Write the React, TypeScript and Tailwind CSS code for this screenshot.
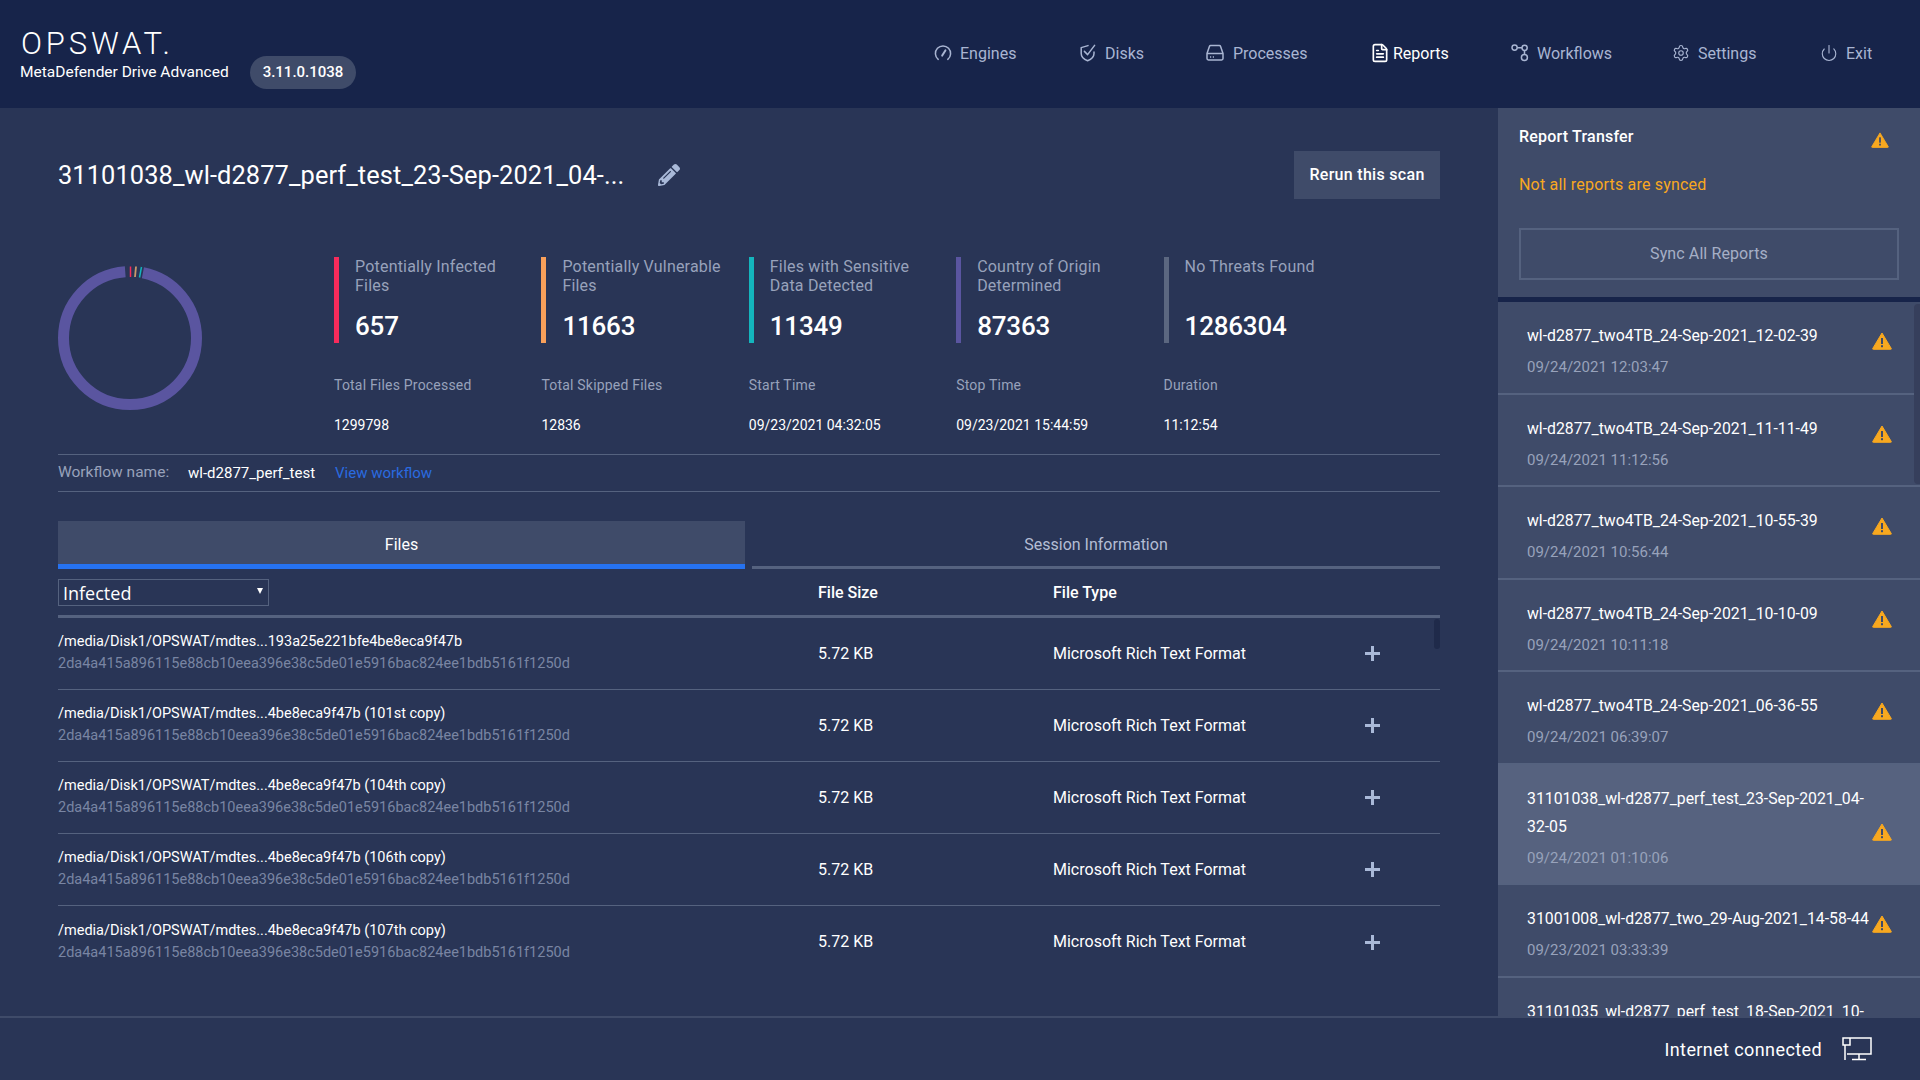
import { FileText, Settings, Power } from "lucide-react";
import { FaPencilAlt } from "react-icons/fa";
import type { ReactNode } from "react";

function GaugeIcon() {
  return (
    <svg width="18" height="18" viewBox="0 0 18 18" fill="none" stroke="currentColor" strokeWidth="1.5" strokeLinecap="round">
      <path d="M4.2 15.4A7.6 7.6 0 1 1 13.8 15.4" />
      <path d="M8.2 11.6 L11.4 6.4" strokeWidth="2" />
    </svg>
  );
}

function ShieldIcon() {
  return (
    <svg width="18" height="18" viewBox="0 0 18 18" fill="none" stroke="currentColor" strokeWidth="1.5" strokeLinecap="round" strokeLinejoin="round">
      <path d="M9 1.6 L2.2 3.6 V9.5 C2.2 13.2 5.6 15.6 8.6 16.8 C11.6 15.6 15 13.2 15 9.5 V8" />
      <path d="M5.4 7.4 L8.6 10.6 L15.6 1.4" />
    </svg>
  );
}

function DriveIcon() {
  return (
    <svg width="18" height="18" viewBox="0 0 18 18" fill="none" stroke="currentColor" strokeWidth="1.5" strokeLinejoin="round">
      <path d="M1 9.5 L3.4 2.4 Q3.7 1.6 4.6 1.6 H13.4 Q14.3 1.6 14.6 2.4 L17 9.5 V14.6 Q17 16 15.6 16 H2.4 Q1 16 1 14.6 Z" />
      <path d="M1 9.5 H17" />
      <path d="M4 12.9 H5.2 M6.8 12.9 H8" />
    </svg>
  );
}

function WorkflowIcon() {
  return (
    <svg width="18" height="18" viewBox="0 0 18 18" fill="none" stroke="currentColor" strokeWidth="1.5">
      <circle cx="3.6" cy="3.6" r="2.6" />
      <circle cx="13.6" cy="3.8" r="2.6" />
      <circle cx="13.4" cy="13.6" r="3" />
      <path d="M6.2 3.7h4.8M13.5 6.4v4.2" />
    </svg>
  );
}

function PlusIcon() {
  return (
    <svg width="15" height="15" viewBox="0 0 15 15" fill="#a9b9d8">
      <rect x="6" width="3" height="15" />
      <rect y="6" width="15" height="3" />
    </svg>
  );
}

function Warn({ className, big }: { className?: string; big?: boolean }) {
  return (
    <svg className={className} viewBox="0 0 20 18" width={big ? 20 : 18} height={big ? 18 : 16}>
      <path d="M10 1 L19.2 16.4 a0.6 0.6 0 0 1 -0.5 0.9 H1.3 a0.6 0.6 0 0 1 -0.5 -0.9 Z" fill="#f8a81f" stroke="#f8a81f" strokeWidth="1" strokeLinejoin="round" />
      <rect x="9" y="6" width="2" height="6" fill="#3f4b69" />
      <rect x="9" y="13.2" width="2" height="2" fill="#3f4b69" />
    </svg>
  );
}

function NetworkIcon() {
  return (
    <svg width="30" height="24" viewBox="0 0 30 24" fill="none" stroke="#fff" strokeWidth="1.5">
      <path d="M7 1h22v16H5M3 8v15M1 1h7v7H1zM17 17v5M10 22.5h14" />
    </svg>
  );
}

const nav: { label: string; icon: ReactNode; w: string; gap: string; active?: boolean }[] = [
  { label: "Engines", icon: <GaugeIcon />, w: "w-[145px]", gap: "gap-[8px]" },
  { label: "Disks", icon: <ShieldIcon />, w: "w-[127px]", gap: "gap-[8px]" },
  { label: "Processes", icon: <DriveIcon />, w: "w-[164px]", gap: "gap-[9px]" },
  { label: "Reports", icon: <FileText size={20} strokeWidth={2} />, w: "w-[141px]", gap: "gap-[3px]", active: true },
  { label: "Workflows", icon: <WorkflowIcon />, w: "w-[161px]", gap: "gap-[8px]" },
  { label: "Settings", icon: <Settings size={18} strokeWidth={1.5} />, w: "w-[148px]", gap: "gap-[8px]" },
  { label: "Exit", icon: <Power size={18} strokeWidth={1.5} />, w: "w-[53px]", gap: "gap-[8px]" },
];

const stats = [
  { label: "Potentially Infected Files", value: "657", bar: "bg-[#f72b5b]" },
  { label: "Potentially Vulnerable Files", value: "11663", bar: "bg-[#f9a05a]" },
  { label: "Files with Sensitive Data Detected", value: "11349", bar: "bg-[#14b5bd]" },
  { label: "Country of Origin Determined", value: "87363", bar: "bg-[#5a55a0]" },
  { label: "No Threats Found", value: "1286304", bar: "bg-[#5b6780]" },
];

const totals = [
  { label: "Total Files Processed", value: "1299798" },
  { label: "Total Skipped Files", value: "12836" },
  { label: "Start Time", value: "09/23/2021 04:32:05" },
  { label: "Stop Time", value: "09/23/2021 15:44:59" },
  { label: "Duration", value: "11:12:54" },
];

const files = [
  "/media/Disk1/OPSWAT/mdtes...193a25e221bfe4be8eca9f47b",
  "/media/Disk1/OPSWAT/mdtes...4be8eca9f47b (101st copy)",
  "/media/Disk1/OPSWAT/mdtes...4be8eca9f47b (104th copy)",
  "/media/Disk1/OPSWAT/mdtes...4be8eca9f47b (106th copy)",
  "/media/Disk1/OPSWAT/mdtes...4be8eca9f47b (107th copy)",
];

const reports = [
  { name: "wl-d2877_two4TB_24-Sep-2021_12-02-39", date: "09/24/2021 12:03:47" },
  { name: "wl-d2877_two4TB_24-Sep-2021_11-11-49", date: "09/24/2021 11:12:56" },
  { name: "wl-d2877_two4TB_24-Sep-2021_10-55-39", date: "09/24/2021 10:56:44" },
  { name: "wl-d2877_two4TB_24-Sep-2021_10-10-09", date: "09/24/2021 10:11:18" },
  { name: "wl-d2877_two4TB_24-Sep-2021_06-36-55", date: "09/24/2021 06:39:07" },
  { name: "31101038_wl-d2877_perf_test_23-Sep-2021_04-32-05", date: "09/24/2021 01:10:06", selected: true },
  { name: "31001008_wl-d2877_two_29-Aug-2021_14-58-44", date: "09/23/2021 03:33:39" },
  { name: "31101035_wl-d2877_perf_test_18-Sep-2021_10-44-11", date: "09/22/2021 11:45:12" },
];

function Donut() {
  return (
    <svg width="144" height="144" viewBox="0 0 144 144" fill="none">
      <circle cx="72" cy="72" r="66.5" stroke="#5a55a0" strokeWidth="11" strokeDasharray="399.3 18.5" strokeDashoffset="-13" transform="rotate(-90 72 72)" />
      <path d="M72.5 0.5 L72.5 11" stroke="#f72b5b" strokeWidth="1.5" />
      <path d="M78 0.5 L77 11" stroke="#c99a6a" strokeWidth="1.8" />
      <path d="M83.5 1 L81.5 11.5" stroke="#14b5bd" strokeWidth="1.5" />
    </svg>
  );
}

export default function App() {
  return (
    <div className="flex h-screen w-full flex-col overflow-hidden bg-[#293556] font-['Roboto',sans-serif] text-white">
      <header className="flex h-[108px] shrink-0 items-center bg-[#17244a]">
        <div className="flex items-end pt-[2px] pl-[20px]">
          <div className="w-[230px]">
            <div className="pt-[2px] pl-[1px] text-[31px] leading-[27px] font-light tracking-[0.125em]">OPSWAT.</div>
            <div className="mt-[5px] text-[15.5px] leading-[20px]">MetaDefender Drive Advanced</div>
          </div>
          <span className="-mb-[7px] flex h-[33px] w-[106px] items-center justify-center rounded-full bg-[#3f4b69] text-[15px] font-medium">3.11.0.1038</span>
        </div>
        <nav className="ml-auto flex pr-[47px]">
          {nav.map((n) => (
            <div key={n.label} className={`flex items-center text-[16px] ${n.gap} ${n.w} ${n.active ? "text-white" : "text-[#a9b5d2]"}`}>
              <span className="-mt-[2px]">{n.icon}</span>
              <span>{n.label}</span>
            </div>
          ))}
        </nav>
      </header>

      <div className="flex min-h-0 flex-1">
        <main className="min-w-0 flex-1 px-[58px]">
          <div className="mt-[43px] flex h-[48px] items-center justify-between">
            <div className="flex items-center gap-[34px]">
              <h1 className="text-[25.4px] leading-[34px] tracking-[0.1px]">31101038_wl-d2877_perf_test_23-Sep-2021_04-...</h1>
              <FaPencilAlt size={22} color="#a9b9d8" />
            </div>
            <button className="h-[48px] w-[146px] bg-[#3f4b69] text-[16px] font-medium tracking-[0.3px]">Rerun this scan</button>
          </div>

          <div className="mt-[58px] flex">
            <div className="w-[276px] shrink-0 pt-[9px]">
              <Donut />
            </div>
            <div className="flex-1">
              <div className="grid grid-cols-[repeat(5,207.4px)]">
                {stats.map((s) => (
                  <div key={s.label} className="flex h-[86px]">
                    <div className={`w-[5px] shrink-0 ${s.bar}`} />
                    <div className="pr-[14px] pl-[16px]">
                      <div className="h-[51px] text-[16px] leading-[19px] tracking-[0.2px] text-[#98a2bb]">{s.label}</div>
                      <div className="text-[26px] leading-[36px] font-medium tracking-[-0.2px]">{s.value}</div>
                    </div>
                  </div>
                ))}
              </div>
              <div className="mt-[32px] grid grid-cols-[repeat(5,207.4px)]">
                {totals.map((t) => (
                  <div key={t.label}>
                    <div className="text-[14px] leading-[20px] tracking-[0.2px] text-[#98a2bb]">{t.label}</div>
                    <div className="mt-[20px] text-[14px] leading-[20px]">{t.value}</div>
                  </div>
                ))}
              </div>
            </div>
          </div>

          <div className="mt-[19px] flex h-[38px] items-center border-y border-[#55627f] text-[15px]">
            <span className="w-[130px] text-[15.5px] text-[#98a2bb]">Workflow name:</span>
            <span className="w-[147px]">wl-d2877_perf_test</span>
            <span className="text-[#2a6be0]">View workflow</span>
          </div>

          <div className="mt-[29px] flex gap-[7px]">
            <div className="flex h-[48px] w-[687px] items-center justify-center border-b-[5px] border-[#2672f0] bg-[#3f4b69] pt-[4px] text-[16px]">Files</div>
            <div className="flex h-[48px] flex-1 items-center justify-center border-b-[3px] border-[#55627f] pt-[2px] text-[16px] text-[#b3bdd4]">Session Information</div>
          </div>

          <div className="flex h-[49px] items-center border-b-[3px] border-[#55627f] pt-[1px]">
            <div className="relative h-[27px] w-[211px]">
              <select className="h-full w-full appearance-none border border-[#55627f] bg-transparent pl-[4px] font-['Open_Sans',sans-serif] text-[18px] leading-[24px]">
                <option className="bg-[#293556]">Infected</option>
              </select>
              <span className="pointer-events-none absolute top-[9px] right-[6px] h-0 w-0 border-x-[3px] border-t-[6px] border-x-transparent border-t-white" />
            </div>
            <span className="ml-[549px] w-[235px] text-[16px] font-medium">File Size</span>
            <span className="text-[16px] font-medium">File Type</span>
          </div>

          <div className="relative">
            <div className="absolute top-[1px] right-0 h-[30px] w-[6px] rounded-full bg-[#1f2a4a]" />
            {files.map((f, i) => (
              <div key={f} className={`flex h-[72px] items-center ${i < files.length - 1 ? "border-b border-[#55627f]" : ""}`}>
                <div className="-mt-[2px] w-[760px]">
                  <div className="text-[14.5px] leading-[23px]">{f}</div>
                  <div className="text-[14.5px] leading-[22px] text-[#7985a3]">2da4a415a896115e88cb10eea396e38c5de01e5916bac824ee1bdb5161f1250d</div>
                </div>
                <div className="w-[235px] text-[16px]">5.72 KB</div>
                <div className="w-[312px] text-[16px]">Microsoft Rich Text Format</div>
                <PlusIcon />
              </div>
            ))}
          </div>
        </main>

        <aside className="flex w-[422px] shrink-0 flex-col bg-[#3f4b69]">
          <div className="h-[194px] shrink-0 border-b-[5px] border-[#17244a] px-[21px]">
            <div className="flex items-start justify-between pt-[17px] pr-[10px]">
              <span className="text-[16px] leading-[24px] font-medium tracking-[0.2px]">Report Transfer</span>
              <Warn className="mt-[7px]" />
            </div>
            <div className="mt-[24px] text-[16px] leading-[24px] tracking-[0.2px] text-[#f8a81f]">Not all reports are synced</div>
            <button className="mt-[31px] h-[52px] w-[380px] border-2 border-[#55627f] text-[16px] tracking-[0.1px] text-[#a6afc6]">Sync All Reports</button>
          </div>
          <div className="relative min-h-0 flex-1 overflow-hidden">
            <div className="absolute top-[2px] right-0 h-[180px] w-[6px] rounded-l-sm bg-[#363f5c]" />
            {reports.map((r) => (
              <div key={r.name} className={`flex items-center border-b-2 border-[#55627f] pr-[28px] pl-[29px] ${r.selected ? "bg-[#56627f]" : ""}`}>
                <div className="min-w-0 flex-1 pt-[20px] pb-[11.5px]">
                  <div className="text-[15.8px] leading-[28px]">{r.name}</div>
                  <div className="mt-[3px] text-[15px] leading-[28px] text-[#98a2bb]">{r.date}</div>
                </div>
                <Warn big className={`shrink-0 ${r.selected ? "mt-[16px]" : "-mt-[12px]"}`} />
              </div>
            ))}
          </div>
        </aside>
      </div>

      <footer className="flex h-[64px] shrink-0 items-center justify-end gap-[20px] border-t-2 border-[#3f4b69] pr-[48px]">
        <span className="text-[18px] tracking-[0.4px]">Internet connected</span>
        <NetworkIcon />
      </footer>
    </div>
  );
}
